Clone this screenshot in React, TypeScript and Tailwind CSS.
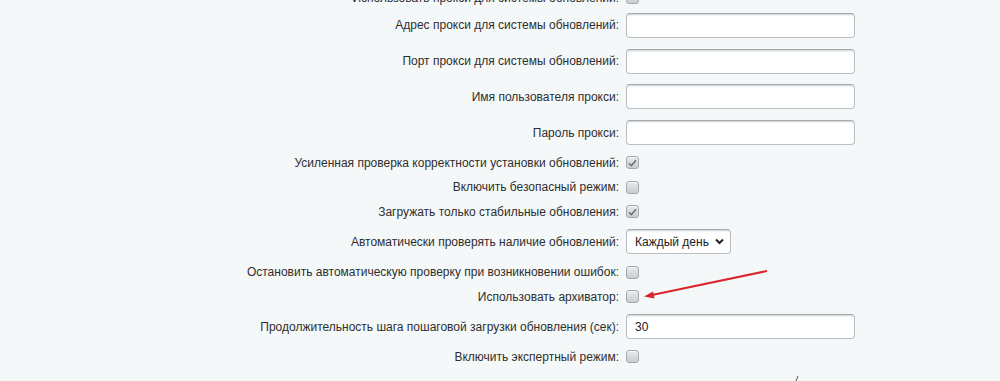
import { ReactNode } from 'react';

type Row =
    | { kind: 'check'; label: string; checked?: boolean; partial?: boolean }
    | { kind: 'input'; label: string; value?: string }
    | { kind: 'select'; label: string; value: string };

const rows: Row[] = [
    { kind: 'check', label: 'Использовать прокси для системы обновлений:', partial: true },
    { kind: 'input', label: 'Адрес прокси для системы обновлений:' },
    { kind: 'input', label: 'Порт прокси для системы обновлений:' },
    { kind: 'input', label: 'Имя пользователя прокси:' },
    { kind: 'input', label: 'Пароль прокси:' },
    { kind: 'check', label: 'Усиленная проверка корректности установки обновлений:', checked: true },
    { kind: 'check', label: 'Включить безопасный режим:' },
    { kind: 'check', label: 'Загружать только стабильные обновления:', checked: true },
    { kind: 'select', label: 'Автоматически проверять наличие обновлений:', value: 'Каждый день' },
    { kind: 'check', label: 'Остановить автоматическую проверку при возникновении ошибок:' },
    { kind: 'check', label: 'Использовать архиватор:' },
    { kind: 'input', label: 'Продолжительность шага пошаговой загрузки обновления (сек):', value: '30' },
    { kind: 'check', label: 'Включить экспертный режим:' },
];

const fieldClass =
    'h-[25px] rounded-[4px] border border-[#b9bfc4] border-t-[#a3a9ae] bg-white shadow-[inset_0_2px_2px_-1px_rgba(180,188,191,0.7)]';

function Checkbox({ checked }: { checked?: boolean }) {
    return (
        <span className="flex h-[13px] w-[13px] items-center justify-center rounded-[3px] border border-[#a3a8ab] bg-gradient-to-b from-[#e9ebec] to-[#c9cdcf] shadow-[inset_0_1px_0_rgba(255,255,255,0.6)]">
            {checked && (
                <svg width="9" height="8" viewBox="0 0 9 8">
                    <path d="M1 4.2 L3.4 6.6 L8 1.2" fill="none" stroke="#6d7276" strokeWidth="1.6" />
                </svg>
            )}
        </span>
    );
}

function Control({ row }: { row: Row }): ReactNode {
    if (row.kind === 'check') return <Checkbox checked={row.checked} />;
    if (row.kind === 'input') {
        return (
            <div className={`${fieldClass} flex w-[229px] items-center px-[8px] text-[12px] text-[#222]`}>
                {row.value}
            </div>
        );
    }
    return (
        <div className={`${fieldClass} flex w-[105px] items-center justify-between pl-[8px] pr-[6px] text-[12px] text-[#222]`}>
            <span className="whitespace-nowrap">{row.value}</span>
            <svg width="9" height="7" viewBox="0 0 9 7" className="shrink-0">
                <path d="M1 1.5 L4.5 5 L8 1.5" fill="none" stroke="#222" strokeWidth="2" />
            </svg>
        </div>
    );
}

export default function App() {
    return (
        <div className="relative h-[381px] w-[1000px] overflow-hidden bg-[#f5f8f9] font-['Liberation_Sans',Arial,sans-serif] text-[12px] text-[#2e2e2e]">
            <div className="-mt-[12.5px] flex flex-col">
                {rows.map((row, i) => (
                    <div
                        key={i}
                        className={`flex items-center ${row.partial ? 'h-[20px]' : row.kind === 'check' ? 'h-[24.5px]' : 'h-[35.75px]'}`}
                    >
                        <div className="w-[619px] whitespace-nowrap text-right leading-[14px]">{row.label}</div>
                        <div className="ml-[7px]">
                            <Control row={row} />
                        </div>
                    </div>
                ))}
            </div>

            {/* red annotation arrow */}
            <svg className="pointer-events-none absolute left-0 top-0" width="1000" height="381">
                <line x1="767" y1="271" x2="652" y2="295" stroke="#d8262b" strokeWidth="2" />
                <path d="M644 296.5 L653 291.5 L654.5 298.5 Z" fill="#d8262b" />
                <line x1="798" y1="376" x2="796" y2="381" stroke="#555" strokeWidth="1" />
            </svg>
        </div>
    );
}
